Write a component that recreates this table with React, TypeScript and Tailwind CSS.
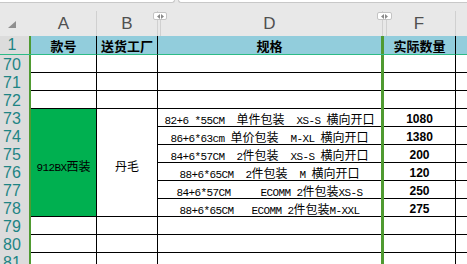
import React from 'react';

const CJK = /([\u3400-\u9fff]+)/;

// SimSun-ish look: half-width latin (6px) + full-width CJK (12px)
function Mixed({ text }: { text: string }) {
  const parts = text.split(CJK).filter(Boolean);
  return (
    <span className="whitespace-pre text-black">
      {parts.map((p, i) =>
        CJK.test(p) ? (
          <span key={i} className="font-['Noto_Sans_CJK_SC',sans-serif] text-[12px]">{p}</span>
        ) : (
          <span key={i} className="font-['Liberation_Mono',monospace] text-[11px] tracking-[-0.6px]">{p}</span>
        )
      )}
    </span>
  );
}

const items = [
  { n: 73, spec: '82+6 *55CM  单件包装  XS-S 横向开口', qty: '1080' },
  { n: 74, spec: '86+6*63cm 单价包装  M-XL 横向开口', qty: '1380' },
  { n: 75, spec: '84+6*57CM  2件包装  XS-S 横向开口', qty: '200' },
  { n: 76, spec: '88+6*65CM  2件包装  M 横向开口', qty: '120' },
  { n: 77, spec: '84+6*57CM     ECOMM 2件包装XS-S', qty: '250' },
  { n: 78, spec: '88+6*65CM   ECOMM 2件包装M-XXL', qty: '275' },
];

const RowNum = ({ n }: { n: number }) => (
  <div className="bg-[#dcdcdc] flex items-center justify-center pr-[5px] pt-px font-['Liberation_Sans',sans-serif] text-[16px] leading-none text-[#1e8484]">
    {n}
  </div>
);

const GreenL = () => <div className="bg-[#4f9a31]" />;
const GreenR = () => <div className="bg-[#4f9a31]" />;

function EmptyRow({ n }: { n: number }) {
  return (
    <>
      <RowNum n={n} />
      <GreenL />
      <div className="bg-white border-b border-r border-black" />
      <div className="bg-white border-b border-r border-black" />
      <div className="bg-white border-b border-black" />
      <GreenR />
      <div className="bg-white border-b border-r border-black" />
      <div className="bg-white border-b border-black" />
    </>
  );
}

const Handle = ({ className }: { className: string }) => (
  <div className={`absolute top-[9px] h-[8px] bg-white border border-[#c4c4c4] rounded-[2px] flex items-center justify-center gap-px ${className}`}>
    <svg width="3" height="5" viewBox="0 0 3 5"><path d="M3 0 L0 2.5 L3 5 Z" fill="#8a8a8a" /></svg>
    <svg width="3" height="5" viewBox="0 0 3 5"><path d="M0 0 L3 2.5 L0 5 Z" fill="#8a8a8a" /></svg>
  </div>
);

export default function App() {
  const letter = "font-['Liberation_Sans',sans-serif] text-[17px] leading-none text-[#505050]";
  const head = "bg-[#92cddc] border-b border-b-[#2dbb87] flex items-center justify-center font-['Noto_Sans_CJK_SC',sans-serif] font-bold text-[13px] leading-none text-black";

  return (
    <div className="w-[467px] h-[264px] overflow-hidden bg-[#e8e8e8] select-none">
      {/* top strip */}
      <div className="flex h-[3px]">
        <div className="w-[175px] bg-white border-b border-r border-[#c8c8c8] rounded-br-[4px]" />
        <div className="w-[3px]" />
        <div className="flex-1 bg-white border-b border-l border-[#c8c8c8] rounded-bl-[4px]" />
      </div>

      {/* column letters */}
      <div className="relative flex h-[33px] items-end">
        <div className="w-[29px] h-full flex items-end pb-[8px] pl-[8px]">
          <svg width="8" height="7" viewBox="0 0 8 7"><path d="M8 0 L8 7 L0 7 Z" fill="#8f8f8f" /></svg>
        </div>
        <div className="w-[2px]" />
        <div className={`w-[66px] h-[25px] border-r border-[#d0d0d0] flex items-center justify-center ${letter}`}>A</div>
        <div className={`w-[61px] h-[25px] border-r border-[#d0d0d0] flex items-center justify-center ${letter}`}>B</div>
        <div className="w-[3px] h-[17px] border-r border-[#d0d0d0]" />
        <div className={`w-[222px] h-[25px] border-r border-[#d0d0d0] flex items-center justify-center pr-[4px] ${letter}`}>D</div>
        <div className="w-[4px] h-[17px] border-r border-[#d0d0d0]" />
        <div className={`w-[69px] h-[25px] border-r border-[#d0d0d0] flex items-center justify-center pr-[4px] ${letter}`}>F</div>
        <div className="flex-1" />
        <Handle className="left-[153px] w-[14px]" />
        <Handle className="left-[377px] w-[15px]" />
      </div>

      {/* sheet */}
      <div className="grid grid-cols-[29px_2px_66px_61px_223px_3px_72px_1fr] grid-rows-[19px] auto-rows-[18px]">
        <div className="bg-[#dcdcdc] border-b border-b-[#2dbb87] flex items-center justify-center pr-[5px] font-['Liberation_Sans',sans-serif] text-[16px] leading-none text-[#1e8484]">1</div>
        <div className="bg-[#4f9a31] border-b border-b-[#2dbb87]" />
        <div className={`${head} border-r border-r-black`}>款号</div>
        <div className={`${head} border-r border-r-black`}>送货工厂</div>
        <div className={head}>规格</div>
        <div className="bg-[#4f9a31] border-b border-b-[#2dbb87]" />
        <div className={`${head} border-r border-r-black`}>实际数量</div>
        <div className={head} />

        <EmptyRow n={70} />
        <EmptyRow n={71} />
        <EmptyRow n={72} />

        {items.map((it, i) => (
          <React.Fragment key={it.n}>
            <RowNum n={it.n} />
            <GreenL />
            {i === 0 && (
              <>
                <div className="row-span-6 bg-[#00b050] border-b border-r border-black flex items-center justify-center pt-[5px] leading-none">
                  <Mixed text="912BX西装" />
                </div>
                <div className="row-span-6 bg-white border-b border-r border-black flex items-center justify-center pt-[4px] leading-none">
                  <Mixed text="丹毛" />
                </div>
              </>
            )}
            <div className="col-start-5 bg-white border-b border-black flex items-center justify-center pt-[2px] leading-none">
              <Mixed text={it.spec} />
            </div>
            <GreenR />
            <div className="bg-white border-b border-r border-black flex items-center justify-center pt-[2px] font-['Liberation_Sans',sans-serif] font-bold text-[12px] leading-none text-black">
              {it.qty}
            </div>
            <div className="bg-white border-b border-black" />
          </React.Fragment>
        ))}

        <EmptyRow n={79} />
        <EmptyRow n={80} />
        <EmptyRow n={81} />
      </div>
    </div>
  );
}
